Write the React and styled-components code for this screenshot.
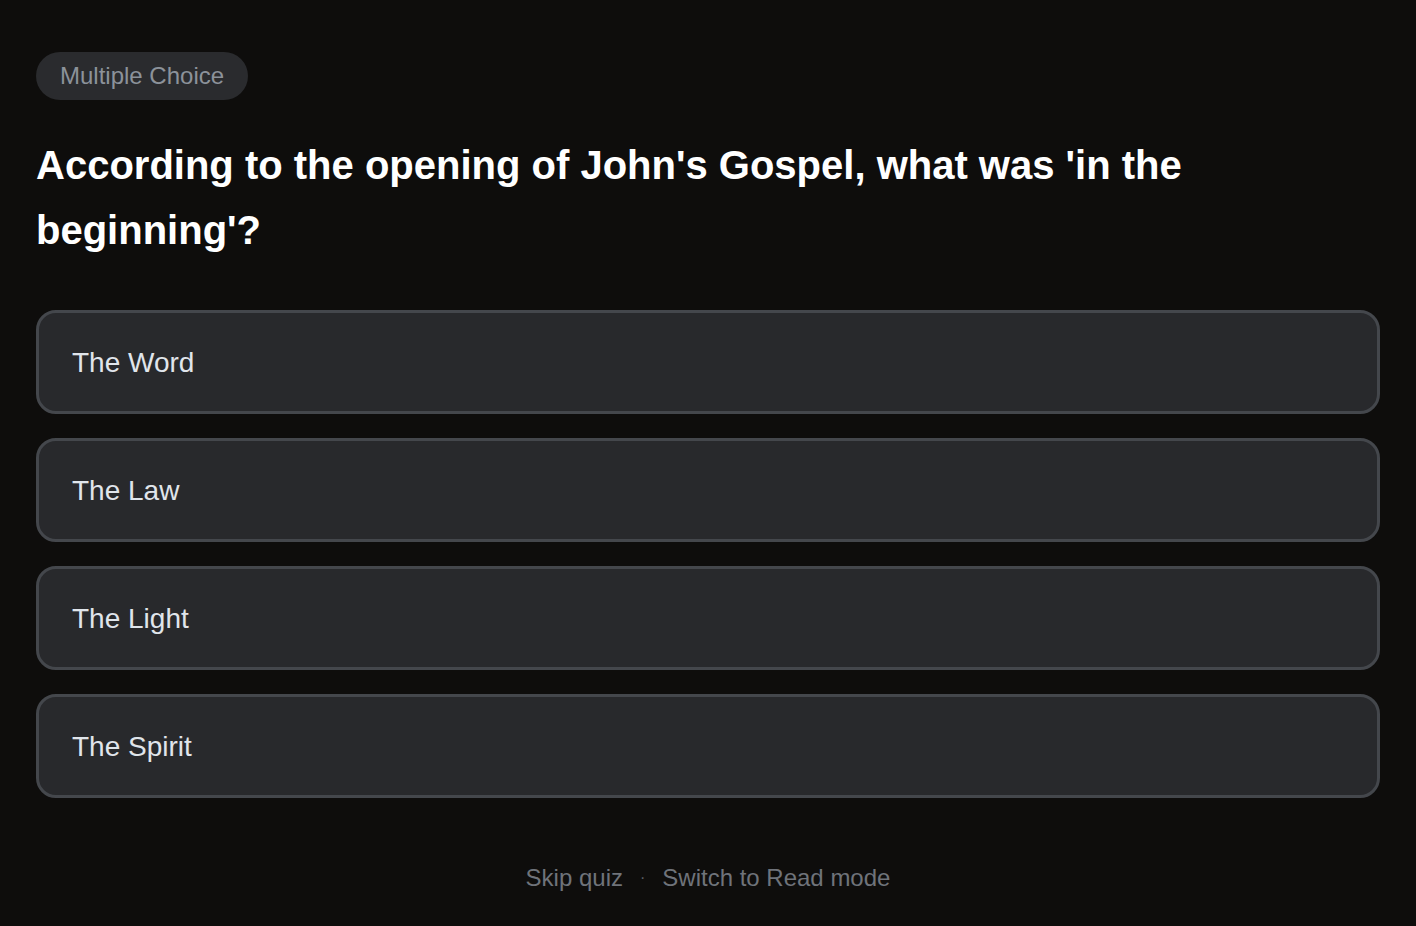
import React from 'react'
import styled, { createGlobalStyle } from 'styled-components'

const GlobalStyle = createGlobalStyle`
  html, body {
    margin: 0;
    padding: 0;
    background: #0e0d0c;
  }
  body {
    font-family: "Liberation Sans", Arial, sans-serif;
  }
`

const options = ['The Word', 'The Law', 'The Light', 'The Spirit']

const Page = styled.div`
  min-height: 926px;
  box-sizing: border-box;
  padding: 52px 36px 0;
  display: flex;
  flex-direction: column;
`

const Badge = styled.span`
  align-self: flex-start;
  height: 48px;
  padding: 0 24px;
  border-radius: 24px;
  background: #2a2b2e;
  color: #8c929a;
  font-size: 24px;
  display: flex;
  align-items: center;
`

const Question = styled.h1`
  margin: 33px 0 47px;
  color: #ffffff;
  font-size: 40px;
  font-weight: 700;
  line-height: 65px;
`

const Options = styled.div`
  display: flex;
  flex-direction: column;
  gap: 24px;
`

const Option = styled.button`
  height: 104px;
  box-sizing: border-box;
  padding: 2px 33px 0;
  border: 3px solid #44474c;
  border-radius: 20px;
  background: #28292c;
  color: #e0e5eb;
  font-family: inherit;
  font-size: 28px;
  text-align: left;
  cursor: pointer;
`

const Footer = styled.div`
  margin-top: 66px;
  display: flex;
  justify-content: center;
  align-items: center;
  gap: 17px;
  font-size: 24px;
  color: #6f737a;
`

const Link = styled.span`
  cursor: pointer;
`

const Dot = styled.span`
  font-size: 16px;
  color: #5c5f65;
`

export default function App() {
  return (
    <>
      <GlobalStyle />
      <Page>
        <Badge>Multiple Choice</Badge>
        <Question>According to the opening of John's Gospel, what was 'in the beginning'?</Question>
        <Options>
          {options.map(o => (
            <Option key={o}>{o}</Option>
          ))}
        </Options>
        <Footer>
          <Link>Skip quiz</Link>
          <Dot>·</Dot>
          <Link>Switch to Read mode</Link>
        </Footer>
      </Page>
    </>
  )
}
